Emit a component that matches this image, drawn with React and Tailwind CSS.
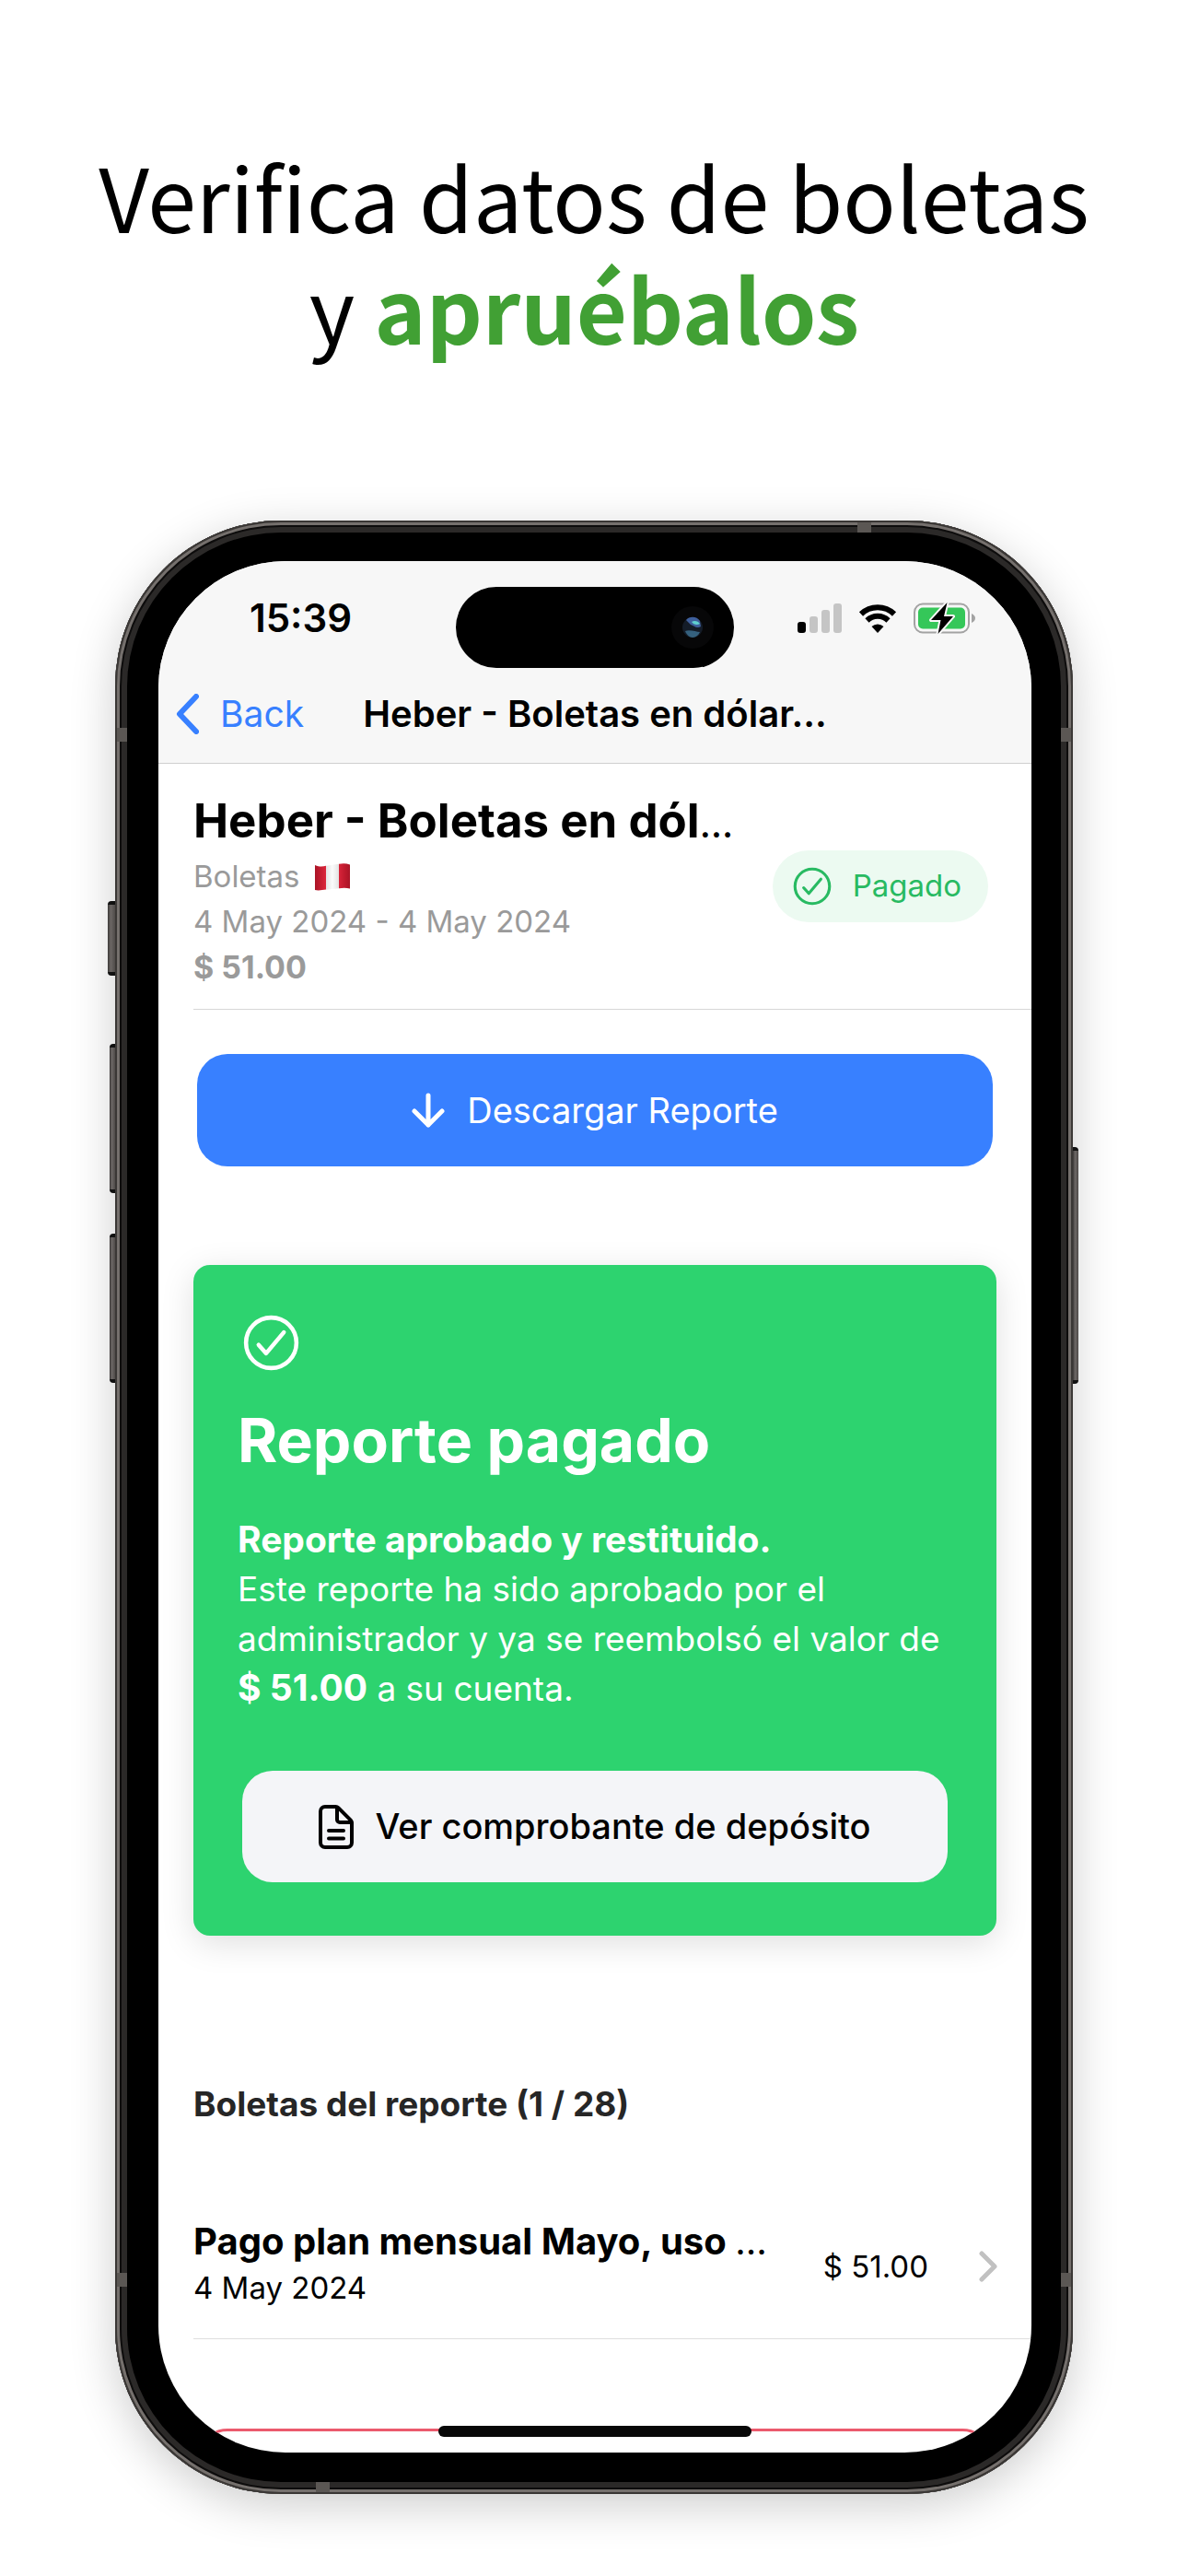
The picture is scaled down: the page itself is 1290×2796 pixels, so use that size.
function CheckCircle({ className }) {
  return (
    <svg viewBox="0 0 512 512" fill="none" stroke="currentColor" strokeWidth="32" className={className} aria-hidden="true">
      <circle cx="256" cy="256" r="192" strokeMiterlimit="10" />
      <path d="M352 176L217.6 336 160 272" strokeLinecap="round" strokeLinejoin="round" />
    </svg>
  );
}

function PeruFlag() {
  return (
    <svg viewBox="0 0 38 30" className="h-[30px] w-[38px]" role="img" aria-label="Perú">
      <defs>
        <linearGradient id="flag-left" x1="0" x2="1">
          <stop offset="0" stopColor="#a91426" />
          <stop offset="0.5" stopColor="#c41c30" />
          <stop offset="1" stopColor="#dc263b" />
        </linearGradient>
        <linearGradient id="flag-mid" x1="0" x2="1">
          <stop offset="0" stopColor="#e4e4e4" />
          <stop offset="0.5" stopColor="#fbfbfb" />
          <stop offset="1" stopColor="#e2e2e2" />
        </linearGradient>
        <linearGradient id="flag-right" x1="0" x2="1">
          <stop offset="0" stopColor="#d8243a" />
          <stop offset="0.5" stopColor="#c01a2e" />
          <stop offset="1" stopColor="#a91426" />
        </linearGradient>
      </defs>
      <path d="M0 2c5 2 8 1.600 12 .8v25.700C8 29 4 30 0 29z" fill="url(#flag-left)" />
      <path d="M12 2.800L26 .8v26.400l-14 1.500z" fill="url(#flag-mid)" />
      <path d="M26 .8C30 0 34 0 38 1.500v26c-4-1.200-8-1-12-.3z" fill="url(#flag-right)" />
    </svg>
  );
}

function StatusIcons() {
  return (
    <div className="flex items-center gap-[18px]">
      <svg viewBox="0 0 48 32" className="h-[32px] w-[48px]" aria-hidden="true">
        <rect x="0" y="20" width="9" height="12" rx="3" fill="#000" />
        <rect x="13" y="14" width="9" height="18" rx="3" fill="#c5c5c5" />
        <rect x="26" y="7" width="9" height="25" rx="3" fill="#c5c5c5" />
        <rect x="39" y="0" width="9" height="32" rx="3" fill="#c5c5c5" />
      </svg>
      <svg viewBox="0 0 42 32" className="h-[32px] w-[42px]" aria-hidden="true">
        <path d="M3 11.500a26 26 0 0 1 36 0" fill="none" stroke="#000" strokeWidth="6" />
        <path d="M9.500 18.500a16.500 16.500 0 0 1 23 0" fill="none" stroke="#000" strokeWidth="6" />
        <path d="M21 32l-6.500-7a9.500 9.500 0 0 1 13 0z" fill="#000" />
      </svg>
      <svg viewBox="0 0 67 36" className="h-[36px] w-[67px]" aria-hidden="true">
        <rect x="1" y="2.500" width="59" height="31" rx="9" fill="none" stroke="#a3a3a3" strokeWidth="2" />
        <path d="M63 13c2.500 1 4 3 4 5s-1.500 4-4 5z" fill="#a3a3a3" />
        <rect x="5" y="6.500" width="51" height="23" rx="5" fill="#35c759" />
        <path d="M36.500 1L19 20h10.500L26.500 35 43 16H33z" fill="#000" stroke="#f7f7f7" strokeWidth="4" strokeLinejoin="round" paintOrder="stroke" />
      </svg>
    </div>
  );
}

function PhoneHardware() {
  const band = "absolute bg-[#5b5754]";
  const key = "absolute bg-[linear-gradient(90deg,#3a3736,#6c6765_40%,#4f4b49)] border-y-4 border-[#111]";
  return (
    <div aria-hidden="true">
      <div className={`${key} -left-2 top-[413px] h-[81px] w-2 rounded-l-sm`} />
      <div className={`${key} -left-1.5 top-[568px] h-[162px] w-1.5 rounded-l-sm`} />
      <div className={`${key} -left-1.5 top-[774px] h-[162px] w-1.5 rounded-l-sm`} />
      <div className={`${key} -right-1.5 top-[680px] h-[257px] w-1.5 rounded-r-sm`} />
      <div className={`${band} left-0.5 top-[225px] h-[15px] w-[11px]`} />
      <div className={`${band} right-0.5 top-[225px] h-[15px] w-[11px]`} />
      <div className={`${band} bottom-[225px] left-0.5 h-[15px] w-[11px]`} />
      <div className={`${band} bottom-[225px] right-0.5 h-[15px] w-[11px]`} />
      <div className={`${band} right-[219px] top-0.5 h-[11px] w-[15px]`} />
      <div className={`${band} bottom-0.5 left-[218px] h-[11px] w-[15px]`} />
    </div>
  );
}

function Header() {
  return (
    <header className="border-b border-[#cfcfcf] bg-[#f7f7f7] pt-7">
      <div className="grid grid-cols-[1fr_302px_1fr]">
        <div className="flex items-center justify-center pb-5 pr-[14px] text-[42px] font-semibold leading-none">15:39</div>
        <div className="flex h-[88px] items-center justify-end rounded-full bg-black pr-[22px]">
          <svg viewBox="0 0 46 46" className="size-[46px]" aria-hidden="true">
            <circle cx="23" cy="23" r="23" fill="#070708" />
            <circle cx="23" cy="23" r="11" fill="#141c28" />
            <path d="M16 15c4-5 12-4 15 1l1 6c-4 3-8-1-11-2z" fill="#3e5f9c" />
            <path d="M22 17c3-2 7-1 9 2-3 2-7 1-9-2z" fill="#5fd0d0" />
            <path d="M15 27c5-2 12 1 16 1-3 7-12 9-16-1z" fill="#35617e" />
          </svg>
        </div>
        <div className="flex items-center justify-end pb-5 pr-[61px]">
          <StatusIcons />
        </div>
      </div>
      <nav className="grid h-[103px] grid-cols-[1fr_auto_1fr] items-center pb-1 text-[40px] leading-[48px]">
        <a href="#reportes" className="flex items-center gap-[23px] pl-[19px] text-[39px] text-[#3880ff]">
          <svg viewBox="0 0 25 44" className="h-[44px] w-[25px]" fill="none" stroke="currentColor" strokeWidth="6" strokeLinecap="round" strokeLinejoin="round" aria-hidden="true">
            <path d="M22 3L4 22l18 19" />
          </svg>
          Back
        </a>
        <h2 className="font-semibold">Heber - Boletas en dólar…</h2>
      </nav>
    </header>
  );
}

function Summary() {
  return (
    <section className="ml-[38px] flex items-center justify-between border-b border-[#d6d6d6] pb-[21px] pr-[47px] pt-[31px]">
      <div className="text-[33px] leading-[49px] text-[#9a9a9a]">
        <h1 className="mb-[5px] text-[51px] font-bold leading-[62px] text-black">
          Heber - Boletas en dól<span className="text-[40px] font-medium leading-none">…</span>
        </h1>
        <p className="flex items-center gap-4">
          Boletas <PeruFlag />
        </p>
        <p>4 May 2024 - 4 May 2024</p>
        <p className="text-[34px] font-bold">$ 51.00</p>
      </div>
      <div className="mb-[10px] flex h-[78px] items-center gap-[19px] rounded-full bg-[#ecfaf1] pl-[18px] pr-[29px] text-[33px] text-[#28ba62]">
        <CheckCircle className="size-[50px]" />
        Pagado
      </div>
    </section>
  );
}

function PaidCard() {
  return (
    <section className="mx-[38px] mt-[107px] rounded-[18px] bg-[#2dd36f] px-12 pb-[58px] pt-12 text-white shadow-[0_8px_36px_rgba(0,0,0,0.13)]">
      <CheckCircle className="size-[73px]" />
      <h2 className="mt-[29px] text-[66px] font-bold leading-[80px]">Reporte pagado</h2>
      <p className="mt-[41px] text-[39px] font-bold leading-[54px]">Reporte aprobado y restituido.</p>
      <p className="text-[37px] leading-[54px]">
        Este reporte ha sido aprobado por el administrador y ya se reembolsó el valor de{" "}
        <b className="text-[39px] leading-none">$ 51.00</b> a su cuenta.
      </p>
      <div className="mx-[5px] mt-[62px]">
        <button type="button" className="flex h-[121px] w-full items-center justify-center gap-[23px] rounded-[33px] bg-[#f4f5f8] text-[38px] font-medium text-black">
          <svg viewBox="0 0 38 48" className="h-[48px] w-[38px]" fill="none" stroke="currentColor" strokeWidth="4" strokeLinejoin="round" strokeLinecap="round" aria-hidden="true">
            <path d="M36 19.500V41a5 5 0 0 1-5 5H7a5 5 0 0 1-5-5V7a5 5 0 0 1 5-5h11.500a4 4 0 0 1 2.800 1.200l13.500 13.500A4 4 0 0 1 36 19.500z" />
            <path d="M20 3v13a3 3 0 0 0 3 3h12.500M11 28h16M11 36.500h16" />
          </svg>
          Ver comprobante de depósito
        </button>
      </div>
    </section>
  );
}

function Receipts() {
  return (
    <section className="ml-[38px] mt-[156px]">
      <h3 className="text-[37px] font-bold leading-[54px] text-[#262626]">Boletas del reporte (1 / 28)</h3>
      <a href="#boleta" className="mt-[71px] flex h-[157px] items-center border-b border-[#dedede] pr-[37px] text-[33px] leading-[51px] text-black">
        <div className="flex-1 pb-1">
          <p className="text-[40px] font-bold">
            Pago plan mensual Mayo, uso <span className="font-normal">…</span>
          </p>
          <p>4 May 2024</p>
        </div>
        <p>$ 51.00</p>
        <svg viewBox="0 0 20 34" className="ml-[55px] h-[34px] w-5" fill="none" stroke="#c1c1c1" strokeWidth="5" strokeLinecap="round" strokeLinejoin="round" aria-hidden="true">
          <path d="M3 3l14 14L3 31" />
        </svg>
      </a>
    </section>
  );
}

export default function App() {
  return (
    <main className="bg-white px-[125px] pb-[88px] pt-[151px] text-black">
      <div className="-mx-20 text-center font-['Noto_Sans_CJK_SC',sans-serif] text-[95px] leading-[121px]">
        <p>Verifica datos de boletas</p>
        <p>
          y <strong className="font-bold text-[#41a034]">apruébalos</strong>&nbsp;
        </p>
      </div>
      <div className="relative mt-[172px] rounded-[180px] bg-black pb-[45px] pl-[47px] pr-[45px] pt-[44px] font-[Inter,sans-serif] shadow-[inset_0_0_0_2px_#3a3735,inset_0_0_0_5px_#75706d,inset_0_0_0_7px_#0d0c0c,inset_0_0_0_13px_#2b2928,0_12px_50px_rgba(0,0,0,0.2)]">
        <PhoneHardware />
        <div className="relative overflow-hidden rounded-[138px] bg-white">
          <Header />
          <Summary />
          <button type="button" className="mx-[42px] mt-12 flex h-[122px] w-[calc(100%-84px)] items-center justify-center gap-6 rounded-[33px] bg-[#3880ff] text-[38px] text-white">
            <svg viewBox="0 0 36 38" className="h-[38px] w-9" fill="none" stroke="currentColor" strokeWidth="5" strokeLinecap="round" strokeLinejoin="round" aria-hidden="true">
              <path d="M18 3v32M3 20l15 15 15-15" />
            </svg>
            Descargar Reporte
          </button>
          <PaidCard />
          <Receipts />
          <div className="mt-[97px] h-[26px] overflow-hidden px-[42px]">
            <div className="h-[122px] rounded-[33px] border-[3px] border-[#eb5a6d]" />
          </div>
          <div className="absolute bottom-[17px] left-1/2 h-3 w-[340px] -translate-x-1/2 rounded-full bg-[#080808]" />
        </div>
      </div>
    </main>
  );
}
